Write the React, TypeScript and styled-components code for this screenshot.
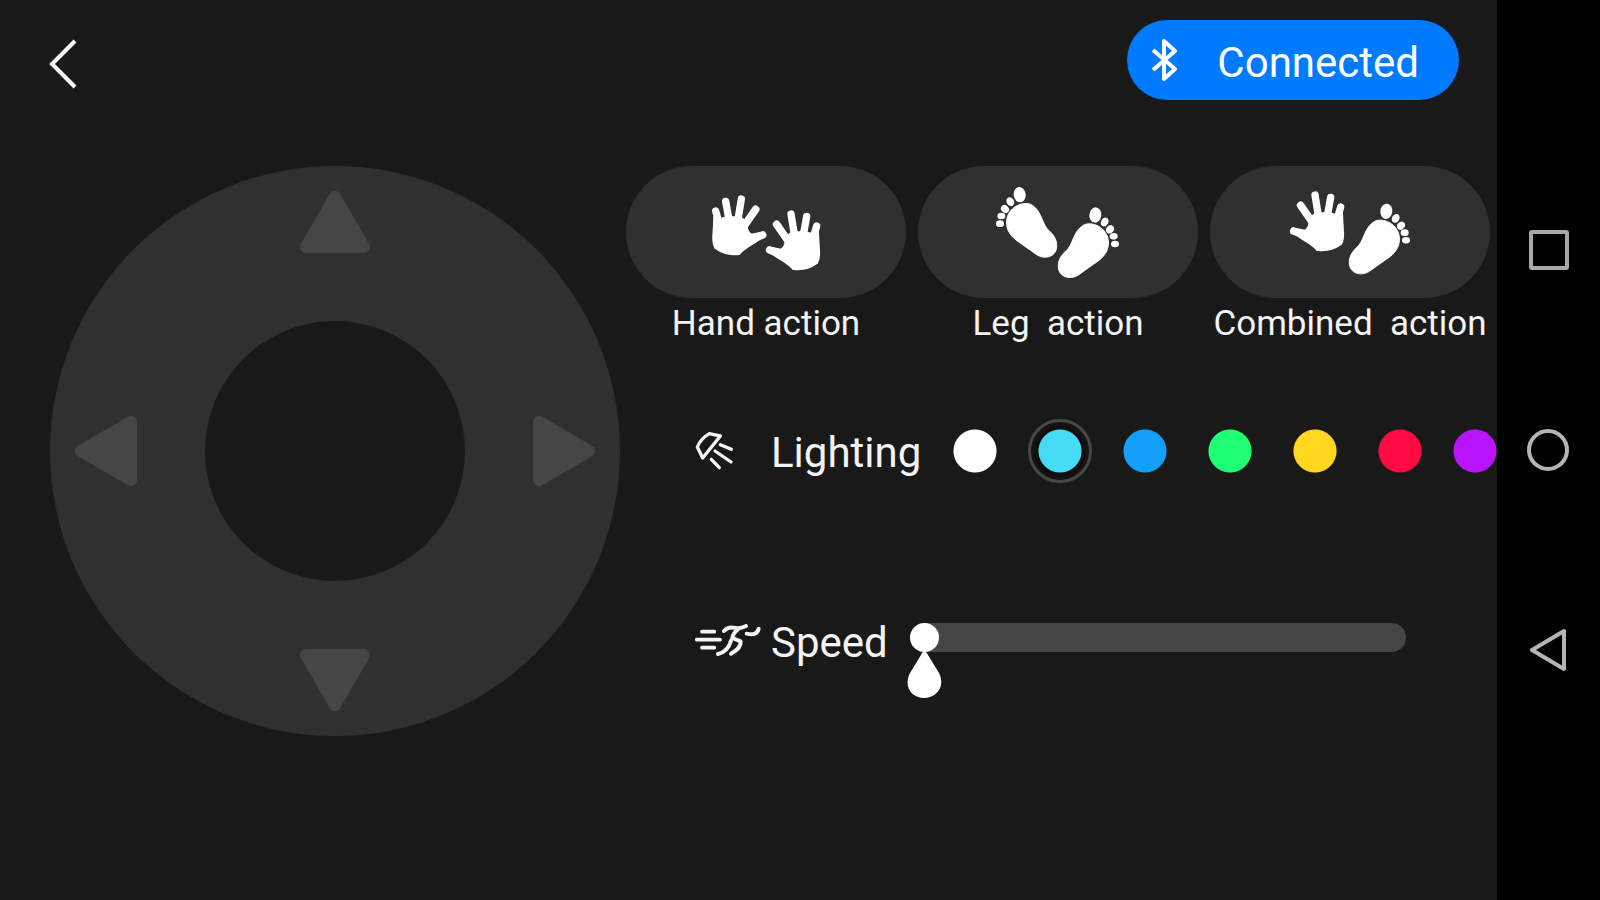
import React, { useState } from "react";
import styled, { createGlobalStyle } from "styled-components";

const GlobalStyle = createGlobalStyle`
  *, *::before, *::after { box-sizing: border-box; }
  body {
    margin: 0;
    background: #191919;
    color: #fff;
    font-family: Roboto, "Liberation Sans", sans-serif;
  }
  button { font: inherit; color: inherit; border: 0; padding: 0; background: none; cursor: pointer; }
  svg { display: block; }
`;

const Page = styled.div`
  display: flex;
  min-height: 100vh;
`;

const Screen = styled.main`
  flex: 1;
  min-width: 0;
  overflow: hidden;
`;

const Header = styled.header`
  display: flex;
  justify-content: space-between;
  align-items: center;
  padding: 20px 38px 0 48px;
`;

const BackButton = styled.button`
  padding-top: 8px;
`;

const ConnectButton = styled.button`
  display: flex;
  align-items: center;
  gap: 38px;
  height: 80px;
  padding: 0 40px 0 24px;
  border-radius: 40px;
  background: #007aff;
  font-size: 42px;
  line-height: 48px;
`;

const ConnectLabel = styled.span`
  padding-top: 6px;
`;

const Body = styled.div`
  display: flex;
  gap: 6px;
  padding: 66px 0 0 50px;
`;

const Dial = styled.div`
  display: grid;
  grid-template-columns: 64px 1fr 64px;
  grid-template-rows: 64px 1fr 64px;
  grid-template-areas: ". up ." "left hub right" ". down .";
  place-items: center;
  flex: none;
  width: 570px;
  height: 570px;
  padding: 24px;
  border-radius: 50%;
  background: #303030;
`;

const Hub = styled.div`
  grid-area: hub;
  width: 260px;
  height: 260px;
  border-radius: 50%;
  background: #191919;
`;

const turns = { up: 0, right: 90, down: 180, left: 270 };
type Direction = keyof typeof turns;

const ArrowButton = styled.button<{ $dir: Direction }>`
  grid-area: ${(p) => p.$dir};
  transform: rotate(${(p) => turns[p.$dir]}deg);
`;

const Panel = styled.div`
  flex: 1;
  min-width: 0;
`;

const Actions = styled.div`
  display: flex;
  gap: 12px;
  padding-right: 7px;
`;

const ActionButton = styled.button`
  flex: 1 1 0;
  min-width: 0;
  display: flex;
  flex-direction: column;
  align-items: center;
  gap: 6px;
`;

const ActionFace = styled.span`
  display: flex;
  align-items: center;
  justify-content: center;
  width: 100%;
  height: 132px;
  border-radius: 66px;
  background: #303030;
`;

const ActionLabel = styled.span`
  font-size: 35px;
  line-height: 40px;
  white-space: pre;
  color: #f4f4f4;
`;

const LightingRow = styled.div`
  display: flex;
  align-items: center;
  height: 64px;
  margin-top: 75px;
  padding-left: 69px;
`;

const SpeedRow = styled.div`
  display: flex;
  align-items: flex-start;
  margin-top: 140px;
  padding: 0 91px 0 69px;
`;

const IconSlot = styled.span`
  flex: none;
  width: 76px;
`;

const RowLabel = styled.label`
  flex: none;
  margin-right: 22px;
  padding-top: 4px;
  font-size: 42px;
  line-height: 32px;
  color: #f4f4f4;
`;

const Swatches = styled.div`
  flex: 1;
  display: flex;
  gap: 21px;
`;

const Swatch = styled.input<{ $color: string }>`
  appearance: none;
  flex: none;
  width: 64px;
  height: 64px;
  margin: 0;
  border: 3px solid transparent;
  border-radius: 50%;
  background: radial-gradient(circle, ${(p) => p.$color} 21px, transparent 22px);
  cursor: pointer;

  &:checked {
    border-color: #4a4646;
    background: radial-gradient(circle, ${(p) => p.$color} 21px, #0c0c0c 22px, #151515 28px);
  }

  &:last-child {
    width: 44px;
    border-width: 0;
  }
`;

const SliderBox = styled.div`
  flex: 1;
  position: relative;
  padding-bottom: 48px;
`;

const Slider = styled.input`
  appearance: none;
  display: block;
  width: 100%;
  height: 29px;
  margin: 0;
  border-radius: 15px;
  background: #454545;

  &::-webkit-slider-thumb {
    appearance: none;
    width: 29px;
    height: 29px;
    border-radius: 50%;
    background: #fff;
  }
`;

const Drop = styled.svg`
  position: absolute;
  top: 27px;
  margin-left: -4px;
  pointer-events: none;
`;

const NavBar = styled.nav`
  display: flex;
  flex-direction: column;
  justify-content: center;
  flex: none;
  width: 103px;
  background: #000;
`;

const NavButton = styled.button`
  display: flex;
  align-items: center;
  justify-content: center;
  height: 200px;
`;

const Hand = ({ transform }: { transform?: string }) => (
  <g transform={transform} fill="#fff" stroke="#fff" strokeLinecap="round">
    <path d="M239 239 300 262" strokeWidth="23" />
    <path d="M260 162 300 220" strokeWidth="23" />
    <path d="M303 131 315 205" strokeWidth="22" />
    <path d="M350 138 338 205" strokeWidth="22" />
    <path d="M380 167 366 215" strokeWidth="22" />
    <path
      strokeWidth="6"
      strokeLinejoin="round"
      d="M287 206 300 190Q340 180 362 190L384 184Q385 210 387 240 389 264 381 278 350 301 310 296 297 281 264 262L244 248 246 233 274 238Q288 228 287 206Z"
    />
  </g>
);

const Foot = ({ transform }: { transform?: string }) => (
  <g transform={transform} fill="#fff">
    <ellipse cx="376" cy="132" rx="18" ry="23" transform="rotate(8 376 132)" />
    <ellipse cx="404" cy="153" rx="11" ry="14" transform="rotate(30 404 153)" />
    <ellipse cx="420" cy="175" rx="11" ry="13" transform="rotate(45 420 175)" />
    <ellipse cx="431" cy="196" rx="12" ry="10" />
    <ellipse cx="435" cy="219" rx="12" ry="10" />
    <path d="M343 161C372 150 420 175 415 222 412 248 395 264 370 280L325 312C300 328 266 318 265 288 264 264 276 250 294 234 312 208 312 178 343 161Z" stroke="#fff" strokeWidth="3" />
  </g>
);

const HandsIcon = () => (
  <svg width="150" height="120" viewBox="3 3 450 360" aria-hidden="true">
    <Hand transform="translate(457 -47) scale(-1 1)" />
    <Hand transform="translate(0 -2)" />
  </svg>
);

const FeetIcon = () => (
  <svg width="170" height="120" viewBox="9 3 510 360" aria-hidden="true">
    <Foot transform="translate(525 -61) scale(-1 1)" />
    <Foot />
  </svg>
);

const HandFootIcon = () => (
  <svg width="170" height="120" viewBox="-15 3 510 360" aria-hidden="true">
    <Hand transform="translate(-168 -59)" />
    <Foot transform="translate(-27 -11)" />
  </svg>
);

const LampIcon = () => (
  <svg width="40" height="40" viewBox="45 93 120 120" fill="none" stroke="#f4f4f4" strokeWidth="10" strokeLinecap="round" strokeLinejoin="round" aria-hidden="true">
    <path d="M88 101 121 108 68 174 52 141Q62 116 88 101Z" />
    <path d="M121 134 154 148M105 153 153 186M94 178 118 203" />
  </svg>
);

const RunnerIcon = () => (
  <svg width="66" height="34" viewBox="45 69 198 102" fill="none" stroke="#f4f4f4" strokeWidth="12" strokeLinecap="round" strokeLinejoin="round" aria-hidden="true">
    <path d="M66 95H103M50 119H120M66 143H103" strokeWidth="11" />
    <path d="M132 93Q144 80 160 83 180 88 198 78" />
    <path d="M174 88Q160 98 157 114L182 124Q184 144 153 161" />
    <path d="M153 122Q144 154 114 162" />
    <path d="M200 101Q232 108 236 86" />
  </svg>
);

const actions = [
  { label: "Hand action", Icon: HandsIcon },
  { label: "Leg  action", Icon: FeetIcon },
  { label: "Combined  action", Icon: HandFootIcon },
];

const colors = [
  { name: "White", value: "#ffffff" },
  { name: "Cyan", value: "#46dcf5" },
  { name: "Blue", value: "#14a0fa" },
  { name: "Green", value: "#1eff73" },
  { name: "Yellow", value: "#ffd71e" },
  { name: "Red", value: "#ff0a41" },
  { name: "Purple", value: "#b914ff" },
];

const directions: Direction[] = ["up", "left", "right", "down"];

export default function App() {
  const [color, setColor] = useState("Cyan");
  const [speed, setSpeed] = useState(0);

  return (
    <Page>
      <GlobalStyle />
      <Screen>
        <Header>
          <BackButton aria-label="Back">
            <svg width="30" height="50" viewBox="0 0 30 50" fill="none" stroke="#fff" strokeWidth="4">
              <path d="M27 2 4 25 27 48" />
            </svg>
          </BackButton>
          <ConnectButton>
            <svg width="28" height="46" viewBox="0 0 28 46" fill="none" stroke="#fff" strokeWidth="4" strokeLinejoin="round" aria-hidden="true">
              <path d="M2 13 24 32 13 42V4L24 14 2 33" />
            </svg>
            <ConnectLabel>Connected</ConnectLabel>
          </ConnectButton>
        </Header>
        <Body>
          <Dial>
            {directions.map((dir) => (
              <ArrowButton key={dir} $dir={dir} aria-label={dir}>
                <svg width="70" height="64" viewBox="0 0 70 64" fill="#464646" stroke="#464646" strokeWidth="12" strokeLinejoin="round">
                  <path d="M35 7 64 57H6Z" />
                </svg>
              </ArrowButton>
            ))}
            <Hub />
          </Dial>
          <Panel>
            <Actions>
              {actions.map(({ label, Icon }) => (
                <ActionButton key={label}>
                  <ActionFace>
                    <Icon />
                  </ActionFace>
                  <ActionLabel>{label}</ActionLabel>
                </ActionButton>
              ))}
            </Actions>
            <LightingRow>
              <IconSlot>
                <LampIcon />
              </IconSlot>
              <RowLabel as="span" id="lighting">Lighting</RowLabel>
              <Swatches role="radiogroup" aria-labelledby="lighting">
                {colors.map((c) => (
                  <Swatch
                    key={c.name}
                    type="radio"
                    name="lighting"
                    aria-label={c.name}
                    $color={c.value}
                    checked={color === c.name}
                    onChange={() => setColor(c.name)}
                  />
                ))}
              </Swatches>
            </LightingRow>
            <SpeedRow>
              <IconSlot>
                <RunnerIcon />
              </IconSlot>
              <RowLabel htmlFor="speed">Speed</RowLabel>
              <SliderBox>
                <Slider
                  id="speed"
                  type="range"
                  min={0}
                  max={100}
                  value={speed}
                  onChange={(e) => setSpeed(Number(e.target.value))}
                />
                <Drop
                  width="37"
                  height="49"
                  viewBox="0 0 37 49"
                  style={{ left: `calc((100% - 29px) * ${speed / 100})` }}
                  aria-hidden="true"
                >
                  <path fill="#fff" d="M18 1Q20 1 22 5L33 23C40 37 30 48 18 48S-3 37 4 23L15 5Q17 1 18 1Z" />
                </Drop>
              </SliderBox>
            </SpeedRow>
          </Panel>
        </Body>
      </Screen>
      <NavBar aria-label="System">
        <NavButton aria-label="Recent apps">
          <svg width="44" height="44" viewBox="0 0 44 44" fill="none" stroke="#a8a8a8" strokeWidth="4">
            <rect x="4" y="4" width="36" height="36" rx="1" />
          </svg>
        </NavButton>
        <NavButton aria-label="Home">
          <svg width="44" height="44" viewBox="0 0 44 44" fill="none" stroke="#b4b4b4" strokeWidth="4">
            <circle cx="21" cy="22" r="19" />
          </svg>
        </NavButton>
        <NavButton aria-label="Back">
          <svg width="44" height="44" viewBox="0 0 44 44" fill="none" stroke="#b4b4b4" strokeWidth="4" strokeLinejoin="round">
            <path d="M5 22 37 3V41Z" />
          </svg>
        </NavButton>
      </NavBar>
    </Page>
  );
}
